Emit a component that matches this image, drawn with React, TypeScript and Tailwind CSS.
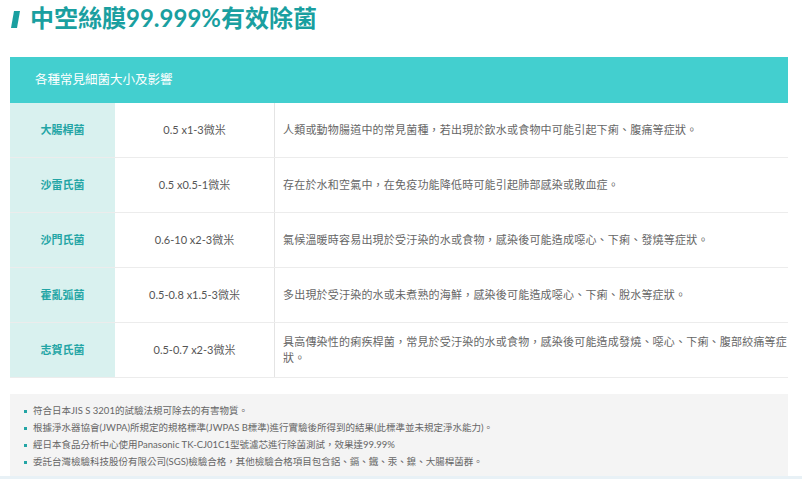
const rows = [
  {
    name: "大腸桿菌",
    size: "0.5 x1-3微米",
    desc: ["人類或動物腸道中的常見菌種，若出現於飲水或食物中可能引起下痢、腹痛等症狀。"],
  },
  {
    name: "沙雷氏菌",
    size: "0.5 x0.5-1微米",
    desc: ["存在於水和空氣中，在免疫功能降低時可能引起肺部感染或敗血症。"],
  },
  {
    name: "沙門氏菌",
    size: "0.6-10 x2-3微米",
    desc: ["氣候溫暖時容易出現於受汙染的水或食物，感染後可能造成噁心、下痢、發燒等症狀。"],
  },
  {
    name: "霍亂弧菌",
    size: "0.5-0.8 x1.5-3微米",
    desc: ["多出現於受汙染的水或未煮熟的海鮮，感染後可能造成噁心、下痢、脫水等症狀。"],
  },
  {
    name: "志賀氏菌",
    size: "0.5-0.7 x2-3微米",
    desc: [
      "具高傳染性的痢疾桿菌，常見於受汙染的水或食物，感染後可能造成發燒、噁心、下痢、腹部絞痛等症",
      "狀。",
    ],
  },
];

const notes = [
  "符合日本JIS S 3201的試驗法規可除去的有害物質。",
  "根據淨水器協會(JWPA)所規定的規格標準(JWPAS B標準)進行實驗後所得到的結果(此標準並未規定淨水能力)。",
  "經日本食品分析中心使用Panasonic TK-CJ01C1型號濾芯進行除菌測試，效果達99.99%",
  "委託台灣檢驗科技股份有限公司(SGS)檢驗合格，其他檢驗合格項目包含鋁、鎘、鐵、汞、鎳、大腸桿菌群。",
];

export default function App() {
  return (
    <div className="w-[802px] h-[479px] overflow-hidden bg-white font-['Lato','Noto_Sans_CJK_TC',sans-serif]">
      <div className="h-[57px] pl-[11px] pt-[1px] flex items-start gap-[10px]">
        <svg width="9" height="17" viewBox="0 0 9 17" className="mt-[10px]">
          <polygon points="3,0 9,0 6,17 0,17" fill="#1a9fa0" />
        </svg>
        <h1 className="text-[24px] leading-[34px] font-bold text-[#1a9fa0]">中空絲膜99.999%有效除菌</h1>
      </div>

      <div className="ml-[10px] w-[778px]">
        <div className="h-[46px] bg-[#43cfcf] flex items-center pl-[25px] text-[12.5px] text-white">
          各種常見細菌大小及影響
        </div>
        {rows.map((row) => (
          <div key={row.name} className="flex h-[55px] border-b border-[#ececec]">
            <div className="w-[105px] bg-[#d9f1ef] flex items-center justify-center text-[11px] font-bold text-[#23a5a5]">
              {row.name}
            </div>
            <div className="w-[160px] flex items-center justify-center text-[11px] text-[#555] border-r border-[#e4e4e4]">
              {row.size}
            </div>
            <div className="flex-1 flex flex-col justify-center pl-[8px] text-[11px] leading-[16px] tracking-[0.2px] text-[#666] whitespace-nowrap overflow-hidden">
              {row.desc.map((line) => (
                <span key={line}>{line}</span>
              ))}
            </div>
          </div>
        ))}

        <div className="mt-[16px] h-[82px] bg-[#f4f4f4] pl-[14px] pt-[9px]">
          {notes.map((note) => (
            <div key={note} className="flex items-center gap-[6px] h-[17px] text-[9.5px] text-[#666]">
              <span className="w-[3px] h-[3px] bg-[#23a5a5] shrink-0" />
              <span>{note}</span>
            </div>
          ))}
        </div>
      </div>
      <div className="h-[6px] bg-[#e8f1f6]" />
    </div>
  );
}
